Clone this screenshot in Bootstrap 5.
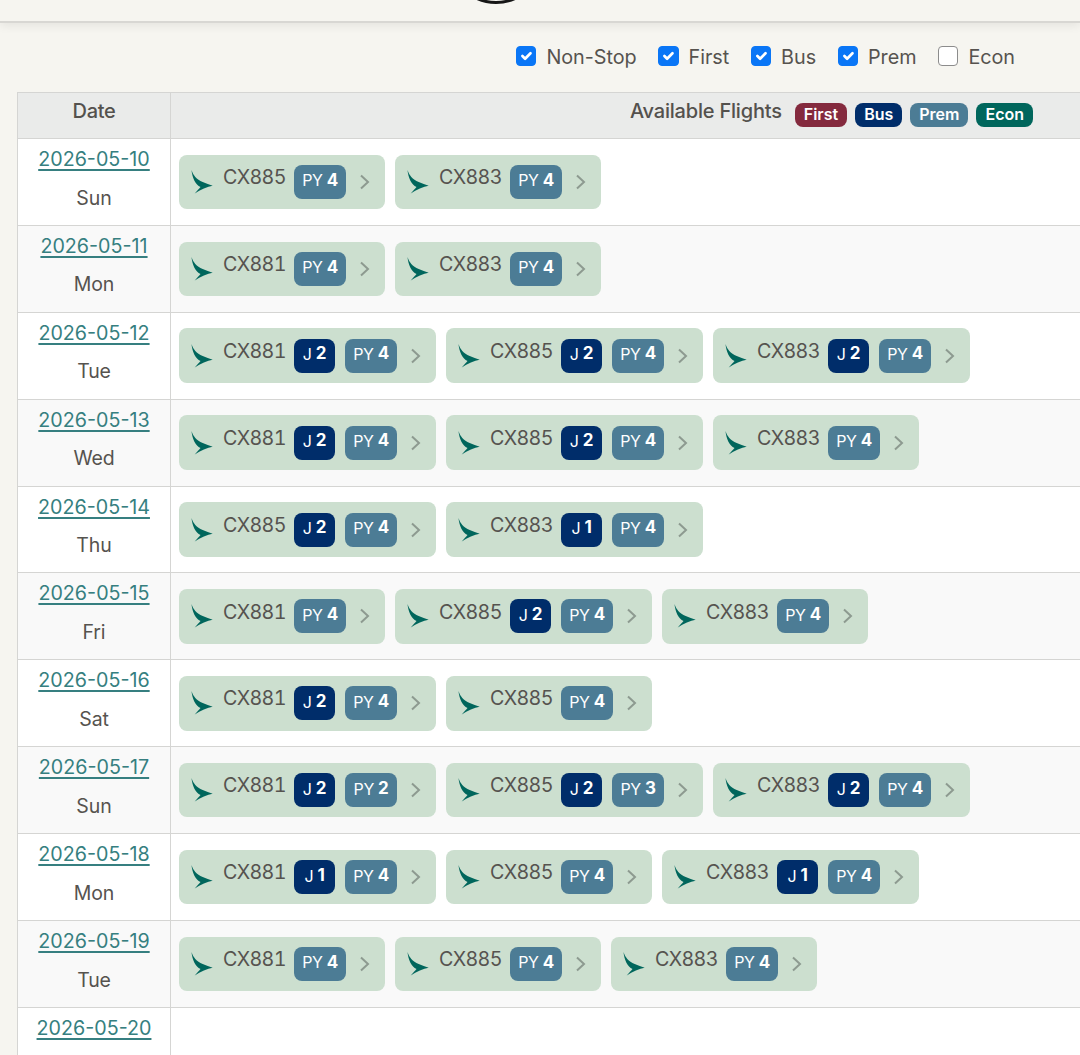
<!DOCTYPE html>
<html lang="en">
<head>
<meta charset="utf-8">
<title>Available Flights</title>
<link href="https://cdn.jsdelivr.net/npm/bootstrap@5.3.0/dist/css/bootstrap.min.css" rel="stylesheet">
<style>
html,body{height:1055px;overflow:hidden}
body{background:#f6f5f0;color:#54514d;font-family:Inter,"Liberation Sans",sans-serif;font-size:20px;line-height:1.5}
.topbar{height:23px;background:#f6f5f0;border-bottom:2px solid #d8d7d3;box-shadow:0 3px 10px rgba(0,0,0,.07);position:relative;overflow:hidden}
.topring{position:absolute;left:449px;top:-90px;width:94px;height:94px;border:3px solid #161616;border-radius:50%}
.filters{height:69px;gap:21.5px;padding-right:65px;padding-top:0}
.filters .form-check{margin:0;padding-left:0;min-height:0;display:flex;align-items:center;height:30px;gap:10px}
.filters .form-check-input{width:20.5px;height:20.5px;margin:-3px 0 0;float:none;border-color:#8c8c8c;border-width:1.5px;border-radius:4px;flex:none}
.filters .form-check-input:checked{background-color:#0a76f6;border-color:#0a76f6}
.filters .form-check-label{font-size:19.8px;color:#56534f;letter-spacing:-.05px}
.tablewrap{padding-left:17px}
.ftable{width:1090px;margin:0;table-layout:fixed;border-collapse:collapse;color:#54514d}
.ftable th,.ftable td{border:1.5px solid #d5d5d3;padding:0;vertical-align:middle}
.ftable thead th{background:#eaebea;height:46px;font-size:20px;font-weight:500;color:#54514d;box-shadow:none;letter-spacing:-.3px}
.ftable .coldate{width:153px;text-align:center}
.ftable .coldate.hdate{padding-bottom:9px}
.ftable tbody tr{height:86.9px}
.ftable tbody tr:nth-child(odd) td{background:#fff;box-shadow:none}
.ftable tbody tr:nth-child(even) td{background:#f9f9f9;box-shadow:none}
.headrow{padding-right:73px;gap:13px;padding-bottom:2px}
.headtext{margin-top:-8px;letter-spacing:-.2px}
.legend{gap:8px;display:flex}
.legend span{font-size:16px;font-weight:600;color:#fff;border-radius:8px;padding:0 9px;height:24px;line-height:23px;letter-spacing:0;display:block}
.c-f{background:#842a3e}
.c-j{background:#002d6a}
.c-w{background:#4c7c95}
.c-e{background:#00665c}
.datecell{line-height:1.3}
.datecell a{display:block;color:#367f80;text-decoration-thickness:2px;text-underline-offset:3px;font-size:19.7px;margin-bottom:13px;margin-top:-6px}
.datecell div{font-size:19.5px;letter-spacing:-.1px;color:#56534f}
.flights{gap:10px;padding-left:8px;padding-right:8px}
.flt{background:#ccdfcf;border-radius:8px;height:54.5px;display:flex;align-items:center;padding:0 0 0 11px}
.flt svg.tail{width:23px;height:26px;flex:none;margin-right:10px}
.flt .code{font-size:19.7px;letter-spacing:-.65px;font-variant-numeric:tabular-nums;color:#56534f;margin-top:-8px;width:62px;margin-right:9px;line-height:1;white-space:nowrap}
.seat{height:34px;border-radius:8px;color:#fff;font-size:16px;display:flex;align-items:center;padding-bottom:3px;gap:4px;letter-spacing:-.3px;justify-content:center}
.seat b{font-weight:700;font-size:17px}
.seat-j{width:41px;margin-right:10px}
.seat-w{width:52px}
.flt .chev{width:11px;height:16px;flex:none;margin-right:15px;margin-left:13px}
</style>
</head>
<body>
<div class="topbar"><div class="topring"></div></div>
<div class="filters d-flex justify-content-end align-items-center">
  <div class="form-check"><input class="form-check-input" type="checkbox" id="f1" checked><label class="form-check-label" for="f1">Non-Stop</label></div>
  <div class="form-check"><input class="form-check-input" type="checkbox" id="f2" checked><label class="form-check-label" for="f2">First</label></div>
  <div class="form-check"><input class="form-check-input" type="checkbox" id="f3" checked><label class="form-check-label" for="f3">Bus</label></div>
  <div class="form-check"><input class="form-check-input" type="checkbox" id="f4" checked><label class="form-check-label" for="f4">Prem</label></div>
  <div class="form-check"><input class="form-check-input" type="checkbox" id="f5"><label class="form-check-label" for="f5">Econ</label></div>
</div>
<div class="tablewrap">
<table class="table ftable">
  <thead><tr>
    <th class="coldate hdate">Date</th>
    <th><div class="headrow d-flex justify-content-end align-items-center"><span class="headtext">Available Flights</span>
      <div class="legend"><span class="c-f">First</span><span class="c-j">Bus</span><span class="c-w">Prem</span><span class="c-e">Econ</span></div></div></th>
  </tr></thead>
  <tbody id="rows"></tbody>
</table>
</div>
<script>
const T='<svg class="tail" viewBox="0 0 23 26"><path fill="#00665c" d="M1.5 1C3 6 6.5 10.5 12.7 13C16 14.4 19.5 15.6 22.7 16.7C17.5 17.6 10.5 20.7 4.7 24.5C6.8 22 9 19.7 10.5 18C5.5 15.8 2.3 9 1.5 1Z"/></svg>';
const C='<svg class="chev" viewBox="0 0 11 16"><path fill="none" stroke="#8d9a90" stroke-width="2" d="M2 1.5L9 8L2 14.5"/></svg>';
const data=[
['2026-05-10','Sun',[['885',0,4],['883',0,4]]],
['2026-05-11','Mon',[['881',0,4],['883',0,4]]],
['2026-05-12','Tue',[['881',2,4],['885',2,4],['883',2,4]]],
['2026-05-13','Wed',[['881',2,4],['885',2,4],['883',0,4]]],
['2026-05-14','Thu',[['885',2,4],['883',1,4]]],
['2026-05-15','Fri',[['881',0,4],['885',2,4],['883',0,4]]],
['2026-05-16','Sat',[['881',2,4],['885',0,4]]],
['2026-05-17','Sun',[['881',2,2],['885',2,3],['883',2,4]]],
['2026-05-18','Mon',[['881',1,4],['885',0,4],['883',1,4]]],
['2026-05-19','Tue',[['881',0,4],['885',0,4],['883',0,4]]],
['2026-05-20','',[]]];
document.getElementById('rows').innerHTML=data.map(r=>`<tr><td class="coldate datecell"><a href="#">${r[0]}</a><div>${r[1]||'&nbsp;'}</div></td><td><div class="flights d-flex">${r[2].map(f=>`<div class="flt">${T}<span class="code">CX${f[0]}</span>${f[1]?`<span class="seat seat-j c-j">J<b>${f[1]}</b></span>`:''}<span class="seat seat-w c-w">PY<b>${f[2]}</b></span>${C}</div>`).join('')}</div></td></tr>`).join('');
</script>
<script src="https://cdn.jsdelivr.net/npm/bootstrap@5.3.0/dist/js/bootstrap.bundle.min.js"></script>
</body>
</html>
